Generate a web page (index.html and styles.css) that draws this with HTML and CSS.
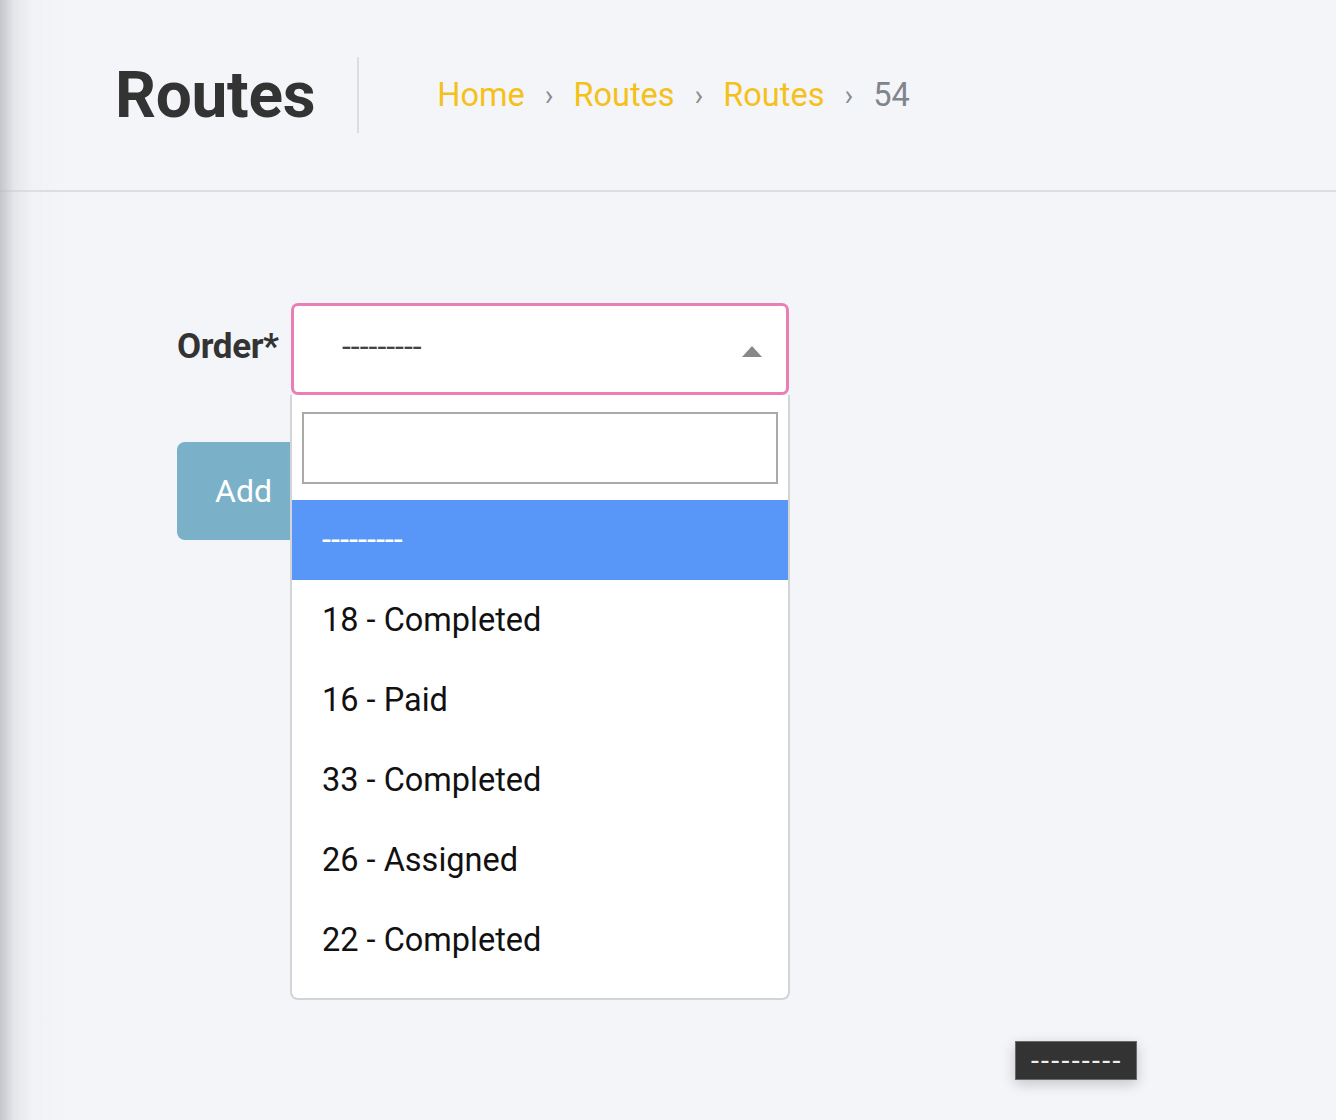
FILE: index.html
```html
<!DOCTYPE html>
<html lang="en">
<head>
    <meta charset="UTF-8">
    <meta name="viewport" content="width=device-width, initial-scale=1.0">
    <title>Routes</title>
    <link rel="stylesheet" href="styles.css">
</head>
<body>
    <header class="page-header">
        <h1 class="page-title">Routes</h1>
        <span class="divider"></span>
        <nav class="breadcrumb">
            <a href="#">Home</a>
            <span class="sep">›</span>
            <a href="#">Routes</a>
            <span class="sep">›</span>
            <a href="#">Routes</a>
            <span class="sep">›</span>
            <span class="current">54</span>
        </nav>
    </header>

    <main class="content">
        <form class="route-form">
            <div class="field-row">
                <label for="order">Order*</label>
                <div class="select-wrap">
                    <div class="select-box">
                        <span class="select-value">---------</span>
                        <span class="select-arrow"></span>
                    </div>
                    <div class="select-dropdown">
                        <div class="select-search">
                            <input type="text" id="order">
                        </div>
                        <ul class="select-options">
                            <li class="highlighted">---------</li>
                            <li>18 - Completed</li>
                            <li>16 - Paid</li>
                            <li>33 - Completed</li>
                            <li>26 - Assigned</li>
                            <li>22 - Completed</li>
                        </ul>
                    </div>
                </div>
            </div>
            <button type="button" class="add-btn">Add</button>
        </form>
    </main>

    <div class="tooltip">---------</div>
</body>
</html>
```

FILE: styles.css
```css
body {
    margin: 0;
    font-family: Roboto, "Liberation Sans", sans-serif;
    background-color: #f4f5f9;
    color: #333;
    min-height: 1120px;
    position: relative;
}
body::before {
    content: "";
    position: fixed;
    left: 0;
    top: 0;
    bottom: 0;
    width: 60px;
    background: linear-gradient(to right, rgba(180, 181, 186, 0.75) 0, rgba(210, 211, 216, 0.45) 14px, rgba(230, 231, 236, 0.2) 32px, rgba(244, 245, 249, 0) 60px);
    pointer-events: none;
    z-index: 10;
}
.page-header {
    display: flex;
    align-items: center;
    height: 190px;
    padding-left: 115px;
    border-bottom: 2px solid #dcdde1;
}
.page-title {
    margin: 0;
    font-size: 64px;
    font-weight: 700;
    color: #333;
    letter-spacing: -0.3px;
}
.divider {
    width: 2px;
    height: 76px;
    margin-left: 42px;
    background: #dcdde1;
}
.breadcrumb {
    display: flex;
    align-items: center;
    margin-left: 78px;
    font-size: 32.5px;
}
.breadcrumb a {
    color: #f4c11a;
    text-decoration: none;
}
.breadcrumb .sep {
    margin: 0 20px;
    color: #888c92;
    font-size: 29px;
}
.breadcrumb .current {
    color: #80848b;
}
.content {
    padding: 111px 0 0 177px;
}
.field-row {
    display: flex;
    align-items: center;
}
.field-row label {
    width: 103px;
    font-size: 35px;
    font-weight: 700;
    color: #333;
    letter-spacing: -0.4px;
    margin-right: 11px;
    padding-bottom: 6px;
    white-space: nowrap;
}
.select-wrap {
    position: relative;
}
.select-box {
    display: flex;
    align-items: center;
    box-sizing: border-box;
    width: 498px;
    height: 92px;
    padding: 0 24px 6px 48px;
    background: #fff;
    border: 3px solid #e97fb5;
    border-radius: 7px;
}
.select-value {
    font-size: 32px;
    color: #444;
}
.select-arrow {
    margin-left: auto;
    margin-top: 10px;
    width: 0;
    height: 0;
    border-left: 10px solid transparent;
    border-right: 10px solid transparent;
    border-bottom: 11px solid #888;
}
.select-dropdown {
    position: absolute;
    top: 92px;
    left: -1px;
    box-sizing: border-box;
    width: 500px;
    height: 605px;
    padding: 17px 0 20px;
    background: #fff;
    border: 2px solid #d4d4d6;
    border-top: none;
    border-radius: 0 0 8px 8px;
    z-index: 5;
}
.select-search {
    padding: 0 10px;
}
.select-search input {
    display: block;
    box-sizing: border-box;
    width: 100%;
    height: 72px;
    border: 2px solid #aaa;
    font-size: 32px;
    padding: 0 10px;
    outline: none;
}
.select-options {
    list-style: none;
    margin: 16px 0 0;
    padding: 0;
}
.select-options li {
    height: 80px;
    line-height: 80px;
    padding-left: 30px;
    font-size: 32.5px;
    color: #111;
}
.select-options li.highlighted {
    background: #5897f7;
    color: #fff;
}
.add-btn {
    display: block;
    margin-top: 47px;
    width: 132px;
    height: 98px;
    padding: 0 0 0 38px;
    text-align: left;
    background: #7ab0c8;
    color: #fff;
    border: none;
    border-radius: 8px;
    font-family: Roboto, "Liberation Sans", sans-serif;
    font-size: 32px;
}
.tooltip {
    position: absolute;
    left: 1015px;
    top: 1041px;
    box-sizing: border-box;
    width: 122px;
    height: 39px;
    line-height: 37px;
    text-align: center;
    background: #333;
    border: 1px solid #6a6a6a;
    color: #eee;
    font-family: "DejaVu Sans", sans-serif;
    font-size: 26px;
    letter-spacing: 0.8px;
    box-shadow: 0 4px 14px rgba(0, 0, 0, 0.2);
}
```
